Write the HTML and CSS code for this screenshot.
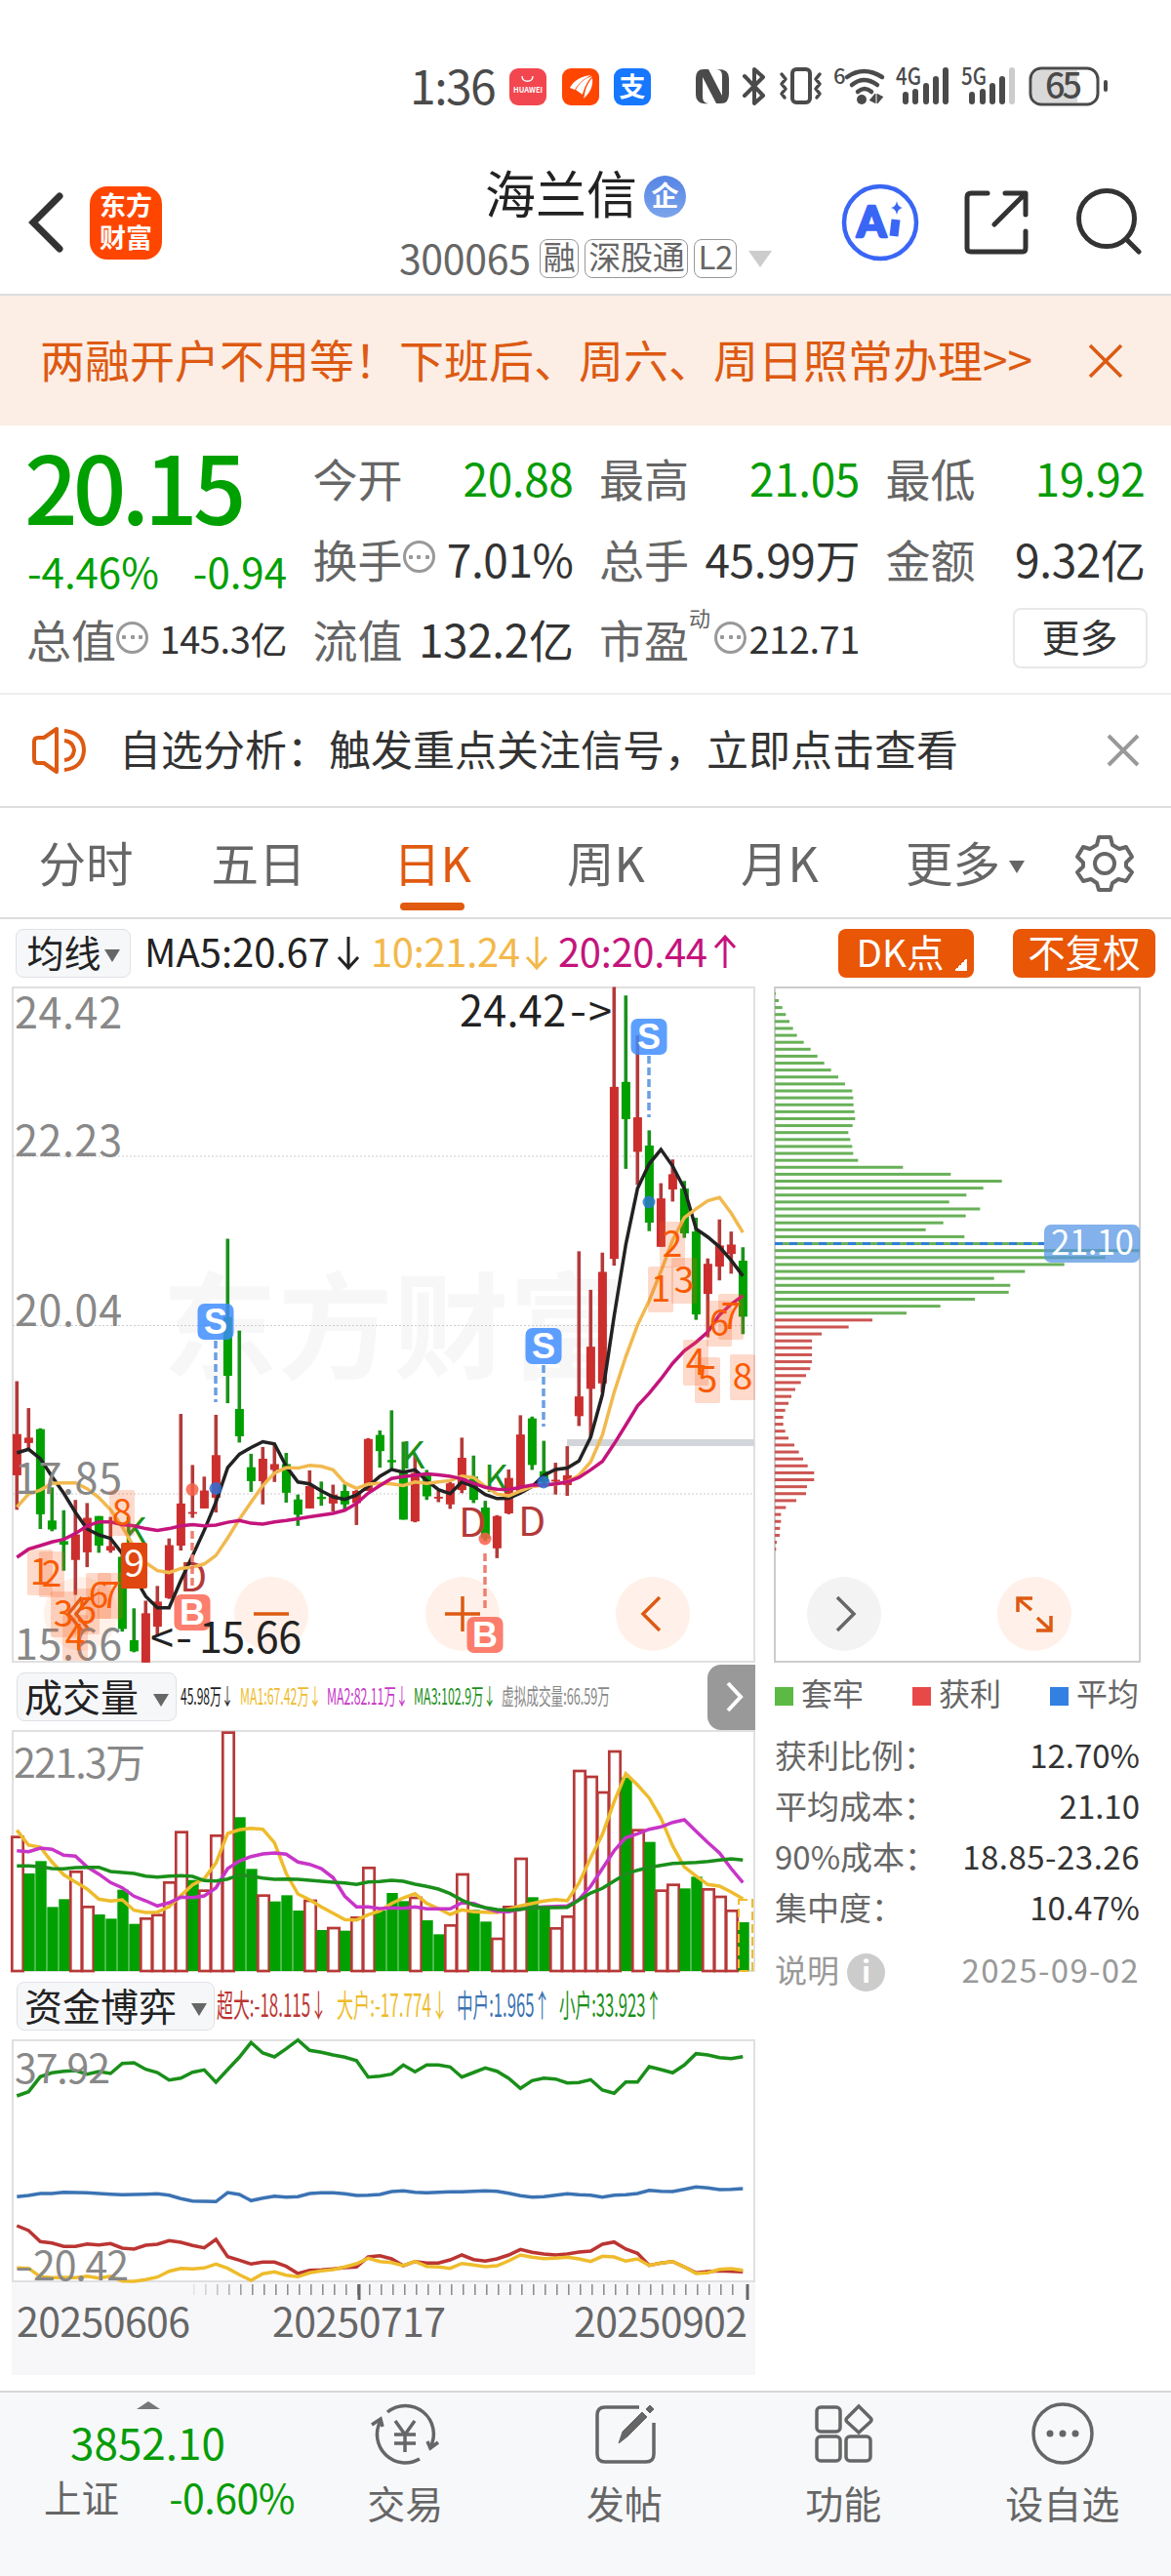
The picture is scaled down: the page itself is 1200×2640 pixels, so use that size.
FILE: index.html
```html
<!DOCTYPE html>
<html lang="zh-CN">
  <head>
    <meta charset="utf-8">
    <title>海兰信 300065</title>
    <link rel="stylesheet" href="styles.css">
  </head>
  <body>
    <div class="statusbar">
      <span class="clock">1:36</span>
      <svg class="app" viewBox="0 0 38 38"><rect width="38" height="38" rx="9" fill="#f2474f"/><path d="M13 8c0 7 11 7 11 0" fill="none" stroke="#fff" stroke-width="1.5"/><text x="4" y="25" font-size="8" font-weight="bold" fill="#fff" textLength="30" lengthAdjust="spacingAndGlyphs">HUAWEI</text></svg>
      <svg class="app" viewBox="0 0 38 38"><rect width="38" height="38" rx="9" fill="#ff4600"/><path d="M8 20C12 12 20 8 30 7c-7 3-13 8-17 15zM14 22c4-7 9-12 17-14-5 5-8 11-10 19zM23 27c1-7 4-13 8-17 1 8-2 15-9 21z" fill="#fff"/></svg>
      <svg class="app" viewBox="0 0 38 38"><rect width="38" height="38" rx="9" fill="#1677ff"/><text x="5.500" y="29" font-size="27" font-weight="bold" fill="#fff">支</text></svg>
      <svg class="sys" viewBox="713 68 424 42">
        <path d="M721 71h5l14 27V78q0-7-6-7 13-1 13 9v16q0 10-8 10h-5l-14-27v20q0 7 6 7-8 1-11-3-2-2-2-7V80q0-9 8-9z" fill="#4a4a4a"/>
        <g fill="none" stroke="#4a4a4a" stroke-width="4" stroke-linecap="round" stroke-linejoin="round">
          <path d="M763 78l19 20-9 8V71l9 8-19 19"/>
          <rect x="812" y="71" width="18" height="34" rx="4"/>
          <path d="M801 76l4 5-4 5 4 5-4 5 3 4M840 76l-4 5 4 5-4 5 4 5-3 4" stroke-width="3.5"/>
          <path d="M868 79q17-12 36 0M873 87q12-10 26 0M879 94q7-6 14 0" stroke-width="4.5"/>
          <rect x="1056" y="70" width="69" height="37" rx="11" stroke-width="3"/>
        </g>
        <circle cx="883" cy="102" r="5" fill="#4a4a4a"/>
        <path d="M891 103l6-7v10M905 99l-6 7v-10" fill="#4a4a4a" stroke="#4a4a4a"/>
        <text x="854" y="86" class="tiny" font-size="22">6</text>
        <text x="918" y="87" class="tiny" font-size="24" textLength="26" lengthAdjust="spacingAndGlyphs">4G</text>
        <text x="985" y="87" class="tiny" font-size="24" textLength="26" lengthAdjust="spacingAndGlyphs">5G</text>
        <path d="M928 97v7M938 94v10M949 88v16M959 81v23M969 72v32M996 97v7M1007 94v10M1017 88v16M1027 81v23" stroke="#4a4a4a" stroke-width="6" stroke-linecap="round"/>
        <path d="M1037 72v32" stroke="#ccc" stroke-width="6" stroke-linecap="round"/>
        <path d="M1067 72h37v33h-37q-9 0-9-9V81q0-9 9-9z" fill="#d9d9d9"/>
        <path d="M1133 84v8" stroke="#4a4a4a" stroke-width="4" stroke-linecap="round"/>
        <text x="1071" y="101" font-size="36" class="tiny" textLength="38">65</text>
      </svg>
    </div>

    <div class="header">
      <svg class="back" viewBox="0 0 36 62"><path d="M32 4L5 31l27 27" fill="none" stroke="#333" stroke-width="7" stroke-linecap="round"/></svg>
      <div class="logo">东方<br>财富</div>
      <div class="stock">
        <div class="name">海兰信<span class="badge">企</span></div>
        <div class="code"><span>300065</span><i class="tag">融</i><i class="tag">深股通</i><i class="tag">L2</i><b class="caret"></b></div>
      </div>
      <svg class="tools" viewBox="860 186 310 84" fill="none" stroke="#333" stroke-width="5" stroke-linecap="round" stroke-linejoin="round">
        <circle cx="900" cy="228" r="37" stroke="#3a66f5" stroke-width="4.500"/>
        <text x="876" y="243" font-size="43" font-family="Lato, sans-serif" font-weight="900" fill="#3a66f5" stroke="#3a66f5" stroke-width="2.500">A</text>
        <path d="M916 225l-2 17" stroke="#3a66f5" stroke-width="9" stroke-linecap="butt"/>
        <path d="M917 206q1 6 6 7-5 1-6 7-1-6-6-7 5-1 6-7z" fill="#3a66f5" stroke="none"/>
        <path d="M1010 198h-17q-4 0-4 4v52q0 4 4 4h53q3 0 3-4v-17M1017 230l31-31M1028 198h21v22"/>
        <circle cx="1132" cy="224" r="28.500"/><path d="M1153 246l12 12"/>
      </svg>
    </div>

    <div class="banner">
      <span>两融开户不用等！下班后、周六、周日照常办理&gt;&gt;</span>
      <svg viewBox="0 0 36 36"><path d="M2 2l32 32M34 2L2 34" stroke="#dd5a12" stroke-width="3.500"/></svg>
    </div>

    <div class="quote">
      <div class="price"><div class="now">20.15</div><div class="chg"><span>-4.46%</span><span>-0.94</span></div></div>
      <div class="cell"><label>今开</label><b class="down">20.88</b></div>
      <div class="cell"><label>最高</label><b class="down">21.05</b></div>
      <div class="cell"><label>最低</label><b class="down">19.92</b></div>
      <div class="cell"><label>换手</label><i class="dots"></i><b>7.01%</b></div>
      <div class="cell"><label>总手</label><b>45.99万</b></div>
      <div class="cell"><label>金额</label><b>9.32亿</b></div>
      <div class="cell"><label>总值</label><i class="dots"></i><b class="small">145.3亿</b></div>
      <div class="cell"><label>流值</label><b>132.2亿</b></div>
      <div class="cell"><label>市盈</label><sup>动</sup><i class="dots"></i><b class="small">212.71</b></div>
      <div class="cell"><span class="more">更多</span></div>
    </div>

    <div class="notice">
      <svg class="horn" viewBox="33 743 56 52" fill="none" stroke="#dd5a12" stroke-width="4" stroke-linejoin="round"><path d="M58 747v44l-13-9h-6q-4 0-4-4v-18q0-4 4-4h6zM66 759q9 1 10 10-1 9-10 10M66 749q20 2 20 20-1 18-20 20"/></svg>
      <span>自选分析：触发重点关注信号，立即点击查看</span>
      <svg class="x" viewBox="0 0 34 34"><path d="M2 2l30 30M32 2L2 32" stroke="#999" stroke-width="4"/></svg>
    </div>

    <div class="tabs">
      <span>分时</span><span>五日</span><span class="active">日K</span><span>周K</span><span>月K</span><span>更多<b class="caret"></b></span>
      <svg viewBox="-30 -30 60 60" fill="none" stroke="#666" stroke-width="4" stroke-linejoin="round"><path d="M-6-27H6L8-19 15-15 22-17 28-7 22-1V3L28 9 22 18 14 16 8 20 6 27H-6L-8 20-14 16-22 18-28 9-22 3V-1L-28-7-22-17-15-15-8-19z"/><circle r="10"/></svg>
    </div>

    <div class="maline">
      <span class="pick">均线<b class="caret"></b></span>
      <svg viewBox="146 950 620 54" font-size="40">
        <text x="148" y="991" fill="#222" textLength="190">MA5:20.67</text>
        <text x="380" y="991" fill="#f3b84b" textLength="153">10:21.24</text>
        <text x="572" y="991" fill="#c4147c" textLength="153">20:20.44</text>
        <g fill="none" stroke-width="3"><path d="M357 960v32m-10-11l10 11 10-11" stroke="#222"/><path d="M550 960v32m-10-11l10 11 10-11" stroke="#f3b84b"/><path d="M743 992v-32m-10 11l10-11 10 11" stroke="#c4147c"/></g>
      </svg>
      <span class="btn dk">DK点</span>
      <span class="btn">不复权</span>
    </div>

    <div class="charts">
      <div class="left">
        <svg id="kline" class="kline" viewBox="12 1011 762 693"></svg>
        <div class="subhead">
          <span class="pick wide">成交量<b class="caret"></b></span>
          <svg viewBox="184 1704 540 69" font-size="23">
            <text x="186" y="1747" fill="#222" textLength="54" lengthAdjust="spacingAndGlyphs">45.98万↓</text>
            <text x="247" y="1747" fill="#eebc2c" textLength="83" lengthAdjust="spacingAndGlyphs">MA1:67.42万↓</text>
            <text x="336" y="1747" fill="#c835c8" textLength="83" lengthAdjust="spacingAndGlyphs">MA2:82.11万↓</text>
            <text x="425" y="1747" fill="#1a8f1a" textLength="84" lengthAdjust="spacingAndGlyphs">MA3:102.9万↓</text>
            <text x="515" y="1747" fill="#888" textLength="111" lengthAdjust="spacingAndGlyphs">虚拟成交量:66.59万</text>
          </svg>
          <span class="fold"><svg viewBox="0 0 20 32"><path d="M3 2l13 14L3 30" fill="none" stroke="#fff" stroke-width="4"/></svg></span>
        </div>
        <svg id="volume" class="sub" viewBox="12 1773 762 248"></svg>
        <div class="subhead">
          <span class="pick wide fundpick">资金博弈<b class="caret"></b></span>
          <svg viewBox="223 2021 500 69" font-size="32">
            <text x="223" y="2067" fill="#bb3533" textLength="113" lengthAdjust="spacingAndGlyphs">超大:-18.115↓</text>
            <text x="346" y="2067" fill="#eebc2c" textLength="114" lengthAdjust="spacingAndGlyphs">大户:-17.774↓</text>
            <text x="469" y="2067" fill="#3b73b3" textLength="96" lengthAdjust="spacingAndGlyphs">中户:1.965↑</text>
            <text x="574" y="2067" fill="#1a8f1a" textLength="105" lengthAdjust="spacingAndGlyphs">小户:33.923↑</text>
          </svg>
        </div>
        <svg id="fund" class="sub" viewBox="12 2090 762 249"></svg>
        <svg id="axis" class="axis" viewBox="12 2339 762 95"></svg>
      </div>
      <div class="right">
        <svg id="chips" class="kline" viewBox="793 1011 376 693"></svg>
        <div class="legend"><span class="g">套牢</span><span class="r">获利</span><span class="b">平均</span></div>
        <div class="info"><span>获利比例：</span><b>12.70%</b></div>
        <div class="info"><span>平均成本：</span><b>21.10</b></div>
        <div class="info"><span>90%成本：</span><b class="range">18.85-23.26</b></div>
        <div class="info"><span>集中度：</span><b>10.47%</b></div>
        <div class="info note"><span>说明<i>i</i></span><b>2025-09-02</b></div>
      </div>
    </div>

    <div class="nav">
      <div class="index">
        <b class="up"></b>
        <div class="point">3852.10</div>
        <div class="rate"><span>上证</span><span class="down">-0.60%</span></div>
      </div>
      <div class="item"><svg viewBox="0 0 74 66"><path d="M19 11a29 29 0 0 1 44 36M52 59A29 29 0 0 1 12 20M3 24l9-6 2 8M71 42l-8 6-3-7"/><path d="M27 20l10 14 10-14M37 34v18M26 34h22M26 43h22"/></svg>交易</div>
      <div class="item"><svg viewBox="0 0 74 66"><path d="M52 6H17q-8 0-8 8v40q0 8 8 8h42q8 0 8-8V22"/><path d="M31 43l4-12 20-20 5 5-20 20zM59 8l4-4 4 4-4 4z" fill="#666" stroke-width="1"/></svg>发帖</div>
      <div class="item"><svg viewBox="0 0 74 66"><rect x="10" y="6" width="24" height="25" rx="4"/><rect x="10" y="36" width="24" height="25" rx="4"/><rect x="40" y="36" width="25" height="25" rx="4"/><path d="M53 5l12 12q2 2 0 4L53 32 41 21q-2-2 0-4z"/></svg>功能</div>
      <div class="item"><svg viewBox="0 0 74 66"><circle cx="37" cy="33" r="30"/><g fill="#666" stroke="none"><circle cx="24" cy="33" r="3.500"/><circle cx="37" cy="33" r="3.500"/><circle cx="50" cy="33" r="3.500"/></g></svg>设自选</div>
    </div>
    <script src="charts.js"></script>
  </body>
</html>
```
FILE: styles.css
```css
body {
  margin: 0;
  width: 1200px;
  height: 2640px;
  overflow: hidden;
  background: #fff;
  color: #333;
  font-family: "Noto Sans CJK SC", sans-serif;
}
svg {
  display: block;
  flex: none;
  overflow: visible;
}
svg text {
  white-space: pre;
}
b, i, label {
  font-weight: normal;
  font-style: normal;
}
.down {
  color: #069c06 !important;
}
.caret {
  display: inline-block;
  border: 8px solid transparent;
  border-top: 13px solid #666;
  border-bottom: 0;
}

/* status bar */
.statusbar {
  height: 68px;
  padding: 56px 0 0 420px;
  display: flex;
  align-items: center;
}
.clock {
  font-size: 48px;
  letter-spacing: -1.5px;
  color: #4a4a4a;
  width: 102px;
  line-height: 68px;
  margin-top: -8px;
}
.app {
  width: 38px;
  height: 38px;
  margin-right: 15.500px;
  margin-top: -3px;
}
.sys {
  width: 424px;
  height: 42px;
  margin-left: 30.500px;
  margin-top: -3px;
}
.tiny {
  fill: #4a4a4a;
  font-weight: 500;
}

/* title */
.header {
  height: 179px;
  display: flex;
  border-bottom: 2px solid #ddd;
  box-sizing: border-box;
}
.back {
  width: 36px;
  height: 62px;
  margin: 73px 27px 0 29px;
}
.logo {
  width: 74px;
  height: 75px;
  padding-top: 2px;
  margin-top: 67px;
  margin-right: 236px;
  border-radius: 18px;
  background: #ff4600;
  color: #fff;
  font-size: 27px;
  font-weight: bold;
  line-height: 33px;
  text-align: center;
  box-sizing: border-box;
}
.stock {
  width: 400px;
  display: flex;
  flex-direction: column;
  align-items: center;
  margin-left: -2px;
}
.name {
  display: flex;
  align-items: center;
  margin-top: 39px;
  height: 66px;
  font-size: 52px;
  color: #222;
}
.badge {
  width: 43px;
  height: 43px;
  line-height: 38px;
  border-radius: 50%;
  margin: 11px 0 0 7px;
  background: linear-gradient(#5684e5, #7ba4ea);
  color: #fff;
  font-size: 28px;
  font-weight: bold;
  text-align: center;
}
.code {
  display: flex;
  align-items: center;
  font-size: 41px;
  line-height: 40px;
  height: 40px;
  margin-top: 16px;
  color: #666;
  letter-spacing: -.3px;
}
.code span {
  margin: -5px 9px 0 0;
}
.tag {
  height: 38px;
  line-height: 32px;
  padding: 0 3px;
  border: 1.500px solid #999;
  border-radius: 8px;
  font-size: 33px;
  margin-right: 6px;
}
.code .caret {
  border-width: 17px 12px 0;
  border-top-color: #ccc;
  margin-left: 6px;
}
.tools {
  width: 310px;
  height: 84px;
  margin: 62px 0 0 62px;
}

.banner {
  height: 133px;
  padding: 0 49px 0 41px;
  display: flex;
  justify-content: space-between;
  align-items: center;
  background: #fceee5;
  color: #dd5a12;
  font-size: 46px;
  line-height: 68px;
  box-sizing: border-box;
}
.banner span {
  margin-top: -5px;
}
.banner svg {
  width: 36px;
  height: 36px;
}

/* quote numbers */
.quote {
  height: 276px;
  padding: 12px 26px 0 28px;
  box-sizing: border-box;
  display: grid;
  grid-template-columns: 266px 266px 266px 265px;
  grid-template-rows: 82.500px 82.500px 82.500px;
  column-gap: 27.500px;
  border-bottom: 2px solid #eee;
}
.price {
  grid-row: span 2;
  color: #00a000;
}
.now {
  height: 98px;
  line-height: 98px;
  font-size: 96px;
  font-weight: 500;
  letter-spacing: -5px;
  margin-left: -3px;
}
.chg {
  display: flex;
  justify-content: space-between;
  line-height: 78px;
  font-size: 42px;
}
.cell {
  display: flex;
  align-items: center;
  white-space: nowrap;
  font-size: 46px;
  line-height: 82px;
  height: 82px;
}
.cell label {
  color: #666;
  margin-left: -1px;
}
.cell b {
  margin-left: auto;
  letter-spacing: -.4px;
  color: #333;
}
.cell .small {
  font-size: 38px;
}
.cell sup {
  font-size: 22px;
  line-height: 24px;
  color: #666;
  margin: -44px 2px 0 0;
  width: 24px;
}
.dots {
  width: 27px;
  height: 27px;
  border: 3px solid #999;
  border-radius: 50%;
  margin-top: -2px;
  background: radial-gradient(circle, #999 2px, transparent 2.500px) center / 8px 8px no-repeat,
    radial-gradient(circle, #999 2px, transparent 2.500px) 1px center / 8px 8px no-repeat,
    radial-gradient(circle, #999 2px, transparent 2.500px) 18px center / 8px 8px no-repeat;
}
.more {
  margin: -1px -2px 0 auto;
  width: 134px;
  height: 58px;
  line-height: 53px;
  border: 2px solid #e8e8e8;
  border-radius: 8px;
  font-size: 39px;
  text-align: center;
}

.notice {
  height: 116px;
  display: flex;
  align-items: center;
  padding: 0 32px 0 33px;
  border-bottom: 2px solid #ddd;
  box-sizing: border-box;
  font-size: 43px;
  line-height: 60px;
}
.notice span {
  margin: -6px 0 0 33px;
}
.horn {
  width: 56px;
  height: 52px;
}
.x {
  width: 34px;
  height: 34px;
  margin-left: auto;
}

/* period tabs */
.tabs {
  height: 114px;
  display: grid;
  grid-template-columns: 176px 178px 178px 178px 178px 212px 98px;
  border-bottom: 2px solid #ddd;
  box-sizing: border-box;
  color: #666;
  font-size: 48.500px;
  line-height: 110px;
  text-align: center;
}
.tabs .active {
  color: #e05a10;
  position: relative;
}
.active::after {
  content: "";
  position: absolute;
  left: 56px;
  bottom: 7px;
  width: 66px;
  height: 8px;
  border-radius: 4px;
  background: #e05a10;
}
.tabs .caret {
  margin: 0 10px 9px 9px;
}
.tabs svg {
  width: 60px;
  height: 60px;
  margin: 27px 0 0 2px;
}

.maline {
  height: 69px;
  display: flex;
  align-items: center;
  padding: 0 16px;
}
.maline svg {
  width: 620px;
  height: 54px;
  margin-left: 12px;
}
.pick {
  height: 48px;
  line-height: 44px;
  width: 116px;
  border: 1.500px solid #dfe1e6;
  border-radius: 8px;
  background: #f6f7f9;
  font-size: 38px;
  color: #222;
  text-align: center;
  white-space: nowrap;
}
.pick .caret {
  margin: 0 0 5px 3px;
}
.btn {
  width: 146px;
  height: 50px;
  line-height: 44px;
  border-radius: 8px;
  background: #e85606;
  color: #fff;
  font-size: 38.500px;
  text-align: center;
  margin-left: 40px;
}
.dk {
  width: 127px;
  padding-right: 12px;
  margin-left: 93px;
  background: linear-gradient(135deg, transparent 50%, #fff 50%) 119px 30px / 13px 13px no-repeat, #e85606;
}

/* charts */
.charts {
  display: grid;
  grid-template-columns: 762px 376px;
  column-gap: 19px;
  padding-left: 12px;
  height: 1439px;
}
.kline {
  width: 100%;
  height: 693px;
}
.subhead {
  height: 69px;
  display: flex;
  align-items: center;
  position: relative;
}
.subhead svg {
  height: 69px;
}
.subhead .wide {
  width: 162px;
  margin-left: 5px;
  font-size: 39px;
}
.subhead .fundpick {
  width: 201px;
}
.wide .caret {
  margin-left: 15px;
}
.subhead > svg {
  margin-left: 2px;
}
.fold {
  position: absolute;
  right: 0;
  top: 2px;
  width: 49px;
  height: 67px;
  border-radius: 14px 0 0 14px;
  background: #999;
}
.fold svg {
  width: 20px;
  height: 32px;
  margin: 17px 0 0 18px;
}
.sub {
  width: 762px;
  height: 248px;
}
#fund {
  height: 249px;
}
.axis {
  width: 762px;
  height: 95px;
  background: #f7f7fa;
}
.legend {
  display: flex;
  justify-content: space-between;
  height: 64px;
  line-height: 60px;
  padding: 0 2px 0 1px;
  font-size: 32px;
  color: #666;
}
.legend span::before {
  content: "";
  display: inline-block;
  width: 19px;
  height: 19px;
  margin-right: 8px;
  background: #5cb944;
}
.legend .r::before {
  background: #e84948;
}
.legend .b::before {
  background: #3180e2;
}
.info {
  display: flex;
  justify-content: space-between;
  height: 52px;
  line-height: 60px;
  padding: 0 1px;
  font-size: 33px;
  color: #666;
}
.info b {
  color: #333;
}
.info .range {
  letter-spacing: .5px;
}
.note, .note b {
  color: #999 !important;
}
.note {
  padding-top: 12px;
}
.note b {
  letter-spacing: 1.300px;
}
.note i {
  display: inline-block;
  width: 39px;
  height: 39px;
  line-height: 35px;
  margin-left: 8px;
  border-radius: 50%;
  background: #ccc;
  color: #fff;
  font-size: 30px;
  font-weight: bold;
  text-align: center;
}

/* bottom nav */
.nav {
  height: 190px;
  display: grid;
  grid-template-columns: 303px repeat(4, 224.500px);
  border-top: 2px solid #d8d8d8;
  box-sizing: border-box;
  background: #f7f8fa;
  color: #666;
}
.index {
  text-align: center;
}
.up {
  display: block;
  width: 0;
  margin: 9px auto 0;
  border: 12px solid transparent;
  border-top: 0;
  border-bottom: 8px solid #777;
}
.point {
  font-size: 44px;
  line-height: 60px;
  margin-top: 3px;
  color: #069c06;
}
.rate {
  display: flex;
  justify-content: space-between;
  padding: 0 1px 0 45px;
  font-size: 38.500px;
  line-height: 58px;
  margin-top: -3px;
}
.rate .down {
  font-size: 41px;
  letter-spacing: -.5px;
}
.item {
  text-align: center;
  font-size: 39px;
  line-height: 60px;
}
.item svg {
  width: 74px;
  height: 66px;
  margin: 9px auto 7px;
  fill: none;
  stroke: #666;
  stroke-width: 3.500px;
}
```
FILE: charts.js
```js
const RED = '#cc2e2e', GREEN = '#00a000';

// [high, body top, body bottom, low, up?] measured from the top of the axis
const days = [
  [905,1023,1115,1192,1],[965,1031,1043,1060,1],[1010,1012,1202,1235,0],[1142,1216,1236,1240,0],
  [1193,1262,1270,1328,0],[1170,1247,1304,1382,1],[1177,1210,1287,1320,1],[1206,1206,1272,1288,0],
  [1208,1273,1283,1288,1],[1290,1297,1458,1464,0],[1412,1483,1508,1510,0],[1395,1423,1533,1533,1],
  [1362,1397,1453,1475,1],[1256,1271,1389,1391,1],[978,1178,1272,1283,1],[1092,1197,1201,1210,1],
  [1118,1149,1189,1189,1],[980,1070,1165,1198,1],[587,762,893,954,0],[792,967,1028,1042,0],
  [1067,1097,1128,1152,0],[1052,1078,1128,1180,1],[1045,1090,1103,1130,1],[1065,1090,1154,1176,0],
  [1158,1169,1203,1228,0],[1104,1139,1189,1189,1],[1129,1163,1168,1183,0],[1136,1158,1178,1196,1],
  [1135,1150,1180,1195,0],[1148,1150,1177,1226,1],[1032,1034,1150,1150,1],[1015,1025,1061,1098,0],
  [970,1081,1086,1100,0],[1040,1105,1214,1214,0],[1068,1110,1218,1220,1],[1103,1110,1162,1170,0],
  [1150,1163,1167,1175,1],[1130,1133,1180,1190,1],[1031,1076,1148,1155,1],[1071,1118,1170,1177,0],
  [1172,1187,1256,1262,0],[1204,1206,1278,1300,1],[1102,1121,1200,1202,1],[981,1024,1150,1152,1],
  [984,988,1092,1103,0],[1038,1106,1130,1135,0],[1087,1125,1129,1158,1],[1050,1115,1137,1161,1],
  [615,939,983,1005,1],[701,828,922,1030,1],[618,661,910,930,1],[25,248,632,647,1],
  [44,237,320,431,0],[133,316,393,467,1],[345,379,551,570,0],[463,497,605,605,1],
  [410,443,477,504,1],[458,475,575,585,0],[540,571,756,768,0],[631,643,710,807,1],
  [544,602,649,680,1],[571,600,621,665,1],[606,636,761,800,0]
];
const ma5 = [1065,1057,1078,1118,1155,1198,1235,1248,1256,1290,1340,1385,1411,1411,1350,1295,1238,1175,1098,1068,1053,1040,1045,1095,1130,1134,1150,1163,1169,1159,1140,1117,1102,1108,1103,1127,1147,1156,1130,1140,1158,1167,1166,1155,1140,1115,1102,1099,1083,1030,935,760,600,475,420,388,425,475,565,583,605,635,670];
const ma10 = [1186,1157,1148,1133,1132,1132,1145,1165,1192,1230,1275,1310,1328,1332,1323,1320,1313,1294,1255,1213,1175,1138,1110,1098,1099,1093,1095,1103,1132,1144,1135,1133,1134,1138,1130,1133,1130,1127,1117,1120,1140,1157,1161,1150,1140,1137,1135,1130,1115,1085,1025,930,850,780,725,660,590,540,520,502,495,530,573];
const ma20 = [1298,1280,1272,1264,1258,1245,1228,1219,1219,1225,1228,1234,1238,1234,1228,1225,1228,1226,1220,1216,1222,1224,1219,1216,1212,1208,1204,1200,1193,1178,1155,1138,1122,1118,1115,1112,1114,1117,1123,1133,1142,1146,1147,1142,1137,1137,1134,1130,1120,1103,1084,1045,1003,960,932,900,865,837,818,795,757,733,714];

const vol = [545,660,622,763,739,652,760,786,799,710,815,796,785,685,530,680,710,541,224,487,646,725,746,727,774,741,834,825,836,793,640,774,720,745,732,804,847,817,660,772,808,858,760,612,733,765,826,790,342,360,408,282,365,524,563,710,692,706,670,706,729,772,810];
const volRed = [0,5,6,11,12,13,14,16,17,18,21,25,27,29,30,34,37,38,41,42,43,46,47,48,49,50,51,53,55,56,59,60,61];
const vma1 = [527,573,579,625,664,686,708,739,745,741,773,780,779,762,728,695,676,628,537,526,521,524,566,660,723,741,763,782,802,803,787,775,752,735,722,752,768,786,772,778,779,780,770,760,752,745,740,744,690,612,540,440,353,388,428,490,575,640,668,694,699,717,738];
const vma2 = [590,593,582,586,604,607,640,662,688,704,730,744,760,750,733,734,729,704,645,622,608,600,597,601,625,632,645,673,730,763,763,768,766,767,763,769,769,769,750,752,766,777,778,770,765,763,761,760,740,700,645,590,550,538,524,517,503,495,530,565,597,645,688];
const vma3 = [637,637,639,645,646,642,641,641,654,657,660,668,671,668,667,669,682,683,677,665,668,674,678,677,678,681,684,687,689,694,686,685,681,684,693,700,708,722,742,757,765,771,773,770,765,765,765,764,742,720,706,683,662,650,641,635,629,628,626,623,619,615,619];

const small = [384,371,325,313,308,306,317,309,315,284,282,302,312,335,329,311,304,342,303,265,220,252,264,239,212,244,250,258,265,275,326,323,317,289,310,289,289,295,326,312,298,308,330,361,337,329,332,344,343,334,366,376,341,341,294,303,313,289,254,258,266,269,263];
const middle = [694,690,684,684,680,681,682,684,686,688,687,686,685,689,700,707,708,709,681,687,706,698,692,695,694,684,682,682,685,690,689,687,678,676,680,682,680,679,679,677,676,677,683,691,695,694,689,685,688,689,695,689,688,684,674,677,678,671,664,667,672,671,669];
const huge = [783,798,832,836,847,847,839,842,838,852,855,843,840,829,834,844,851,825,878,889,901,895,895,908,930,920,919,916,912,910,879,875,885,906,893,898,898,888,873,887,892,885,873,856,865,870,873,870,864,861,840,833,855,868,905,898,893,910,928,924,922,923,925];
const large = [913,914,940,943,942,943,938,944,938,953,954,949,941,923,914,916,913,901,914,934,951,931,925,935,940,928,922,918,910,900,883,893,896,906,893,908,910,914,899,904,909,906,891,873,880,884,883,880,885,893,877,879,892,885,905,898,893,910,930,928,917,915,920];

const chips = [45,54,65,76,87,98,110,131,152,173,194,215,237,258,280,283,284,287,289,281,268,274,280,283,298,436,583,740,683,631,578,673,629,560,506,625,870,1163,1058,932,811,716,766,761,657,551,447,342,269,186,156,156,156,156,151,138,122,105,93,84,74,68,68,74,84,102,116,129,143,163,163,141,138,108,76,61,61,58,57,48,46];

const X = i => 17.3 + 12 * i;
const K = v => 1000 + v / 2.178;
const rect = (x, y, w, h, a) => `<rect x="${x}" y="${y}" width="${w}" height="${h}" ${a}/>`;
const line = (data, fy, color, w = 3.5) =>
  `<polyline points="${data.map((v, i) => X(i) + ',' + fy(v).toFixed(1)).join(' ')}" fill="none" stroke="${color}" stroke-width="${w}"/>`;
const text = (x, y, s, size, color, len, more = '') =>
  `<text x="${x}" y="${y}" font-size="${size}" fill="${color}" ${len ? `textLength="${len}"` : ''} ${more}>${s}</text>`;
const stretch = 'lengthAdjust="spacingAndGlyphs"';

function drawKline() {
  let s = rect(13, 1012, 760, 691, 'fill="#fff" stroke="#e0e0e0" stroke-width="2"');
  s += text(166, 1404, '东方财富', 118, '#f7f7f7', 474, 'font-weight="bold"');
  [1185, 1358.5, 1531].forEach(y => {
    s += `<path d="M13 ${y}H773" stroke="#ccc" stroke-dasharray="2 2"/>`;
  });
  s += rect(581, 1475, 192, 7, 'fill="#d2d5da"');
  [83, 278, 474, 669].forEach(x => {
    s += `<circle cx="${x}" cy="1654" r="38" fill="#fff1e9"/>`;
  });
  s += '<g fill="none" stroke="#dd5a12" stroke-width="3.5"><path d="M260 1654h36M456 1654h36M474 1636v36M676 1637l-17 17 17 17M84 1637l-14 17 14 17M92 1637l-14 17 14 17"/></g>';

  days.forEach((d, i) => {
    const c = d[4] ? RED : GREEN, x = X(i);
    s += rect(x - 1.8, K(d[0]), 3.6, K(d[3]) - K(d[0]), `fill="${d[4] ? '#b43a3a' : '#1a921a'}"`);
    s += rect(x - 4.4, K(d[1]), 9, K(d[2]) - K(d[1]), `fill="${c}"`);
  });

  // K / D turning points
  [[126, 1583], [411, 1505], [496, 1529]].forEach(p => s += text(p[0], p[1], 'K', 38, '#1a921a'));
  [[184, 1631], [470, 1575], [531, 1574]].forEach(p => s += text(p[0], p[1], 'D', 41, '#b43a3a'));

  s += line(ma5, K, '#222') + line(ma10, K, '#f1b94e') + line(ma20, K, '#c4147c');
  [['24.42', 1054], ['22.23', 1185], ['20.04', 1358.5], ['17.85', 1530.5], ['15.66', 1701]].forEach(p => {
    s += text(15, p[1], p[0], 43, '#888', 110);
  });

  // nine-turn counters
  [[28,1588,1],[40,1590,2],[52,1631,3],[64,1655,4],[76,1628,5],[88,1612,6],[100,1612,7],[112,1527,8],
   [664,1298,1],[676,1252,2],[688,1289,3],[700,1373,4],[712,1391,5],[724,1333,6],[736,1326,7],[748,1388,8]].forEach(n => {
    s += rect(n[0], n[1], 26, 47, 'rx="2" fill="#f75e1e" fill-opacity=".23"');
    s += text(n[0] + 13, n[1] + 36, n[2], 37, '#f95b00', 0, 'text-anchor="middle"');
  });
  s += rect(124, 1581, 27, 47, 'rx="2" fill="#e0460f"') + text(137.5, 1616, 9, 38, '#fff', 0, 'text-anchor="middle"');

  [[197, 1526.6, '#f8604a'], [221, 1525.5, '#3170d4'], [557, 1519, '#3170d4'], [665, 1232, '#2c7ad0'], [497, 1577, '#f8604a']].forEach(d => {
    s += `<circle cx="${d[0]}" cy="${d[1]}" r="6.500" fill="${d[2]}" fill-opacity=".85"/>`;
  });
  [[221, 1336, 1], [557, 1361, 1], [665, 1044, 1], [197, 1634, 0], [497, 1657, 0]].forEach(m => {
    const [x, y, sell] = m;
    s += `<path d="M${x} ${sell ? y + 38 : y - 65}v${sell ? 63 : 60}" stroke="${sell ? '#6a9fe3' : '#ee7f70'}" stroke-width="3.5" stroke-dasharray="8 4"/>`;
    s += rect(x - 18.5, y, 37, 37, `rx="7" fill="${sell ? '#3c8cff' : '#fb6450'}" fill-opacity=".83"`);
    s += text(x, y + 31, sell ? 'S' : 'B', 36, '#fff', 0, 'text-anchor="middle" font-weight="bold" font-family="Liberation Sans, sans-serif"');
  });
  s += text(471, 1052, '24.42', 43, '#222', 109) + text(584, 1052, '-', 43, '#222', 17, stretch) + text(603, 1052, '&gt;', 43, '#222', 24, stretch);
  s += text(154, 1694, '&lt;', 43, '#222', 24, stretch) + text(180, 1694, '-', 43, '#222', 17, stretch) + text(204, 1694, '15.66', 43, '#222', 105);
  document.getElementById('kline').innerHTML = s;
}

function drawVolume() {
  const V = c => 1700 + c / 3;
  let s = rect(13, 1774, 760, 246, 'fill="#fff" stroke="#e0e0e0" stroke-width="2"');
  s += text(14, 1822, '221.3万', 41, '#888', 135);
  vol.forEach((v, i) => {
    const x = X(i) - 5.3;
    if (volRed.includes(i)) s += rect(x + .3, V(v) + 1, 11.4, 2019 - V(v), 'fill="#fff" stroke="#b83838" stroke-width="2.7"');
    else s += rect(x + .3, V(v), 11.4, 2020 - V(v), `fill="${GREEN}"`);
  });
  s += rect(757, 1947, 14, 73, 'fill="none" stroke="#eebc2c" stroke-width="2" stroke-dasharray="9 4"');
  s += line(vma1, V, '#eebc2c') + line(vma2, V, '#c835c8') + line(vma3, V, '#1a8f1a');
  document.getElementById('volume').innerHTML = s;
}

function drawFund() {
  const F = c => 2020 + c / 3;
  let s = rect(13, 2091, 760, 247, 'fill="#fff" stroke="#e0e0e0" stroke-width="2"');
  s += line(small, F, '#1a8f1a') + line(middle, F, '#3b73b3') + line(huge, F, '#bb3533') + line(large, F, '#eebc2c');
  s += text(15, 2134.5, '37.92', 41, '#888', 98) + text(15, 2337, '-', 41, '#888', 19, stretch) + text(34, 2337, '20.42', 41, '#888', 98);
  document.getElementById('fund').innerHTML = s;
}

function drawAxis() {
  let s = '';
  for (let i = 15; i < 62; i++) {
    s += `<path d="M${X(i) + 1.5} 2341v11" stroke="#888" stroke-width="1.500" opacity="${Math.min(1, (i - 14) / 6)}"/>`;
  }
  s += '<path d="M368 2341v16M766 2341v16" stroke="#666" stroke-width="3"/>';
  [[17, '20250606'], [279, '20250717'], [588, '20250902']].forEach(d => s += text(d[0], 2395, d[1], 41, '#666', 178));
  document.getElementById('axis').innerHTML = s;
}

function drawChips() {
  let s = rect(794, 1012, 374, 691, 'fill="#fff" stroke="#ccc" stroke-width="2"');
  chips.forEach((v, i) => {
    s += rect(794, K(40 + 15.5 * i) - 1.5, (v - 42) / 3, 3, `fill="${i < 47 ? '#68b058' : '#cc5552'}"`);
  });
  s += '<path d="M794 1274.500H1070" stroke="#2f7fd6" stroke-width="3" stroke-dasharray="8 7"/>';
  s += rect(1070, 1255, 98, 39, 'rx="7" fill="#5796e4" fill-opacity=".74"');
  s += text(1077, 1286, '21.10', 35, '#fff', 85);
  s += '<circle cx="865" cy="1654" r="38" fill="#f3f3f3"/><circle cx="1060" cy="1654" r="38" fill="#fff1e9"/>';
  s += '<path d="M858 1637l17 17-17 17" fill="none" stroke="#666" stroke-width="3.500"/>';
  s += '<path d="M1043 1652v-14h15M1044 1639l13 11M1062 1671h15v-15M1063 1658l13 12" fill="none" stroke="#dd5a12" stroke-width="3.500"/>';
  document.getElementById('chips').innerHTML = s;
}

drawKline();
drawVolume();
drawFund();
drawAxis();
drawChips();
```
